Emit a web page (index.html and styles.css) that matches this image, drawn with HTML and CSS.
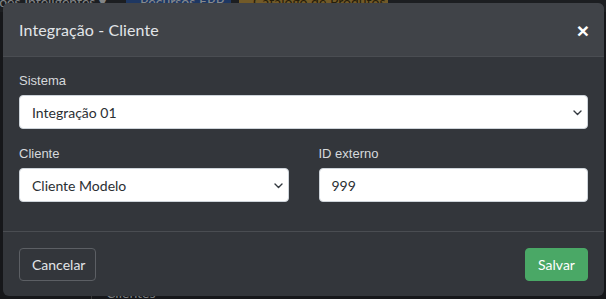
FILE: index.html
```html
<!DOCTYPE html>
<html lang="pt-BR">
<head>
<meta charset="utf-8">
<title>Integração - Cliente</title>
<link rel="stylesheet" href="styles.css">
</head>
<body>
<div class="page">
  <nav class="navbar">
    <span class="nav-link">Soluções Inteligentes ▾</span>
    <span class="nav-btn blue">Recursos ERP</span>
    <span class="nav-btn gold">Catálogo de Produtos</span>
  </nav>
  <div class="page-body">
    <div class="side"></div>
    <div class="main"><span class="page-title">Clientes</span></div>
  </div>
</div>
<div class="backdrop"></div>
<div class="modal">
  <div class="modal-header">
    <h5 class="modal-title">Integração - Cliente</h5>
    <span class="close">&times;</span>
  </div>
  <div class="modal-body">
    <div class="field">
      <label class="label">Sistema</label>
      <div class="select"><span>Integração 01</span>
        <svg class="chev" width="9" height="6" viewBox="0 0 9 6"><path d="M1 1 L4.5 4.5 L8 1" fill="none" stroke="#343a40" stroke-width="1.4" stroke-linecap="round" stroke-linejoin="round"/></svg>
      </div>
    </div>
    <div class="row">
      <div class="field">
        <label class="label">Cliente</label>
        <div class="select"><span>Cliente Modelo</span>
          <svg class="chev" width="9" height="6" viewBox="0 0 9 6"><path d="M1 1 L4.5 4.5 L8 1" fill="none" stroke="#343a40" stroke-width="1.4" stroke-linecap="round" stroke-linejoin="round"/></svg>
        </div>
      </div>
      <div class="field">
        <label class="label">ID externo</label>
        <div class="select"><span>999</span></div>
      </div>
    </div>
  </div>
  <div class="modal-footer">
    <button class="btn btn-outline">Cancelar</button>
    <button class="btn btn-success">Salvar</button>
  </div>
</div>
</body>
</html>
```

FILE: styles.css
```css
* { box-sizing: border-box; }
html, body { margin: 0; padding: 0; }
body {
  width: 606px;
  height: 299px;
  overflow: hidden;
  background: #222428;
  font-family: "Lato", "Liberation Sans", sans-serif;
  position: relative;
}
.page { width: 100%; height: 299px; overflow: hidden; }
.navbar {
  display: flex;
  align-items: center;
  height: 22px;
  margin-top: -10px;
  background: #2b2e33;
  gap: 8px;
}
.nav-link {
  color: #c8ccd0;
  font-size: 14px;
  margin-left: -34px;
  width: 152px;
  white-space: nowrap;
}
.nav-btn {
  height: 22px;
  font-size: 14px;
  padding: 0 14px;
  color: #d0d4d8;
  display: flex;
  align-items: center;
  white-space: nowrap;
}
.nav-btn.blue { background: #2f5597; width: 105px; }
.nav-btn.gold { background: #b08a3e; width: 149px; color: #3a2e10; }
.page-body { display: flex; height: 287px; }
.side { width: 92px; border-right: 1px solid #555; margin-top: 60px; }
.main { padding: 270px 0 0 14px; }
.page-title { color: #bfc3c7; font-size: 14px; line-height: 16px; }
.backdrop {
  position: absolute;
  inset: 0;
  background: rgba(0, 0, 0, 0.35);
}
.modal {
  position: absolute;
  left: 3px;
  top: 3px;
  width: 601px;
  height: 293px;
  background: #33363b;
  border-radius: 6px;
  overflow: hidden;
  display: flex;
  flex-direction: column;
}
.modal-header {
  height: 54px;
  background: #404348;
  border-bottom: 1px solid #4a4d52;
  display: flex;
  align-items: center;
  justify-content: space-between;
  padding: 0 16px;
}
.modal-title {
  margin: 0;
  font-weight: 400;
  font-size: 16px;
  color: #e2e5e8;
  letter-spacing: 0.1px;
}
.close {
  color: #ffffff;
  font-size: 21px;
  font-weight: 700;
  font-family: "Liberation Sans", sans-serif;
  line-height: 1;
  margin-right: -1px;
  margin-top: 2px;
}
.modal-body {
  padding: 16px 16px 0;
  height: 175px;
  border-bottom: 1px solid #4a4d52;
}
.field { display: flex; flex-direction: column; }
.label {
  font-family: "Liberation Sans", "Arial", sans-serif;
  font-size: 13px;
  color: #d6d9dc;
  margin-bottom: 7px;
  line-height: 15px;
}
.select {
  height: 34px;
  background: #ffffff;
  border: 1px solid #ced4da;
  border-radius: 4px;
  display: flex;
  align-items: center;
  justify-content: space-between;
  padding: 0 5px 0 12px;
  font-size: 14px;
  color: #2b2f33;
}
.chev { margin-top: 1px; }
.row {
  display: grid;
  grid-template-columns: 1fr 1fr;
  column-gap: 30px;
  margin-top: 17px;
}
.modal-footer {
  flex: 1;
  display: flex;
  align-items: center;
  justify-content: space-between;
  padding: 0 16px;
}
.btn {
  height: 33px;
  border-radius: 4px;
  font-family: "Lato", sans-serif;
  font-size: 14px;
  padding: 0 12px;
  margin-top: 1px;
}
.btn-outline {
  background: transparent;
  border: 1px solid #5c5f64;
  color: #e2e5e8;
  width: 77px;
}
.btn-success {
  background: #4aa866;
  border: 1px solid #4aa866;
  color: #ffffff;
  width: 63px;
}
```
